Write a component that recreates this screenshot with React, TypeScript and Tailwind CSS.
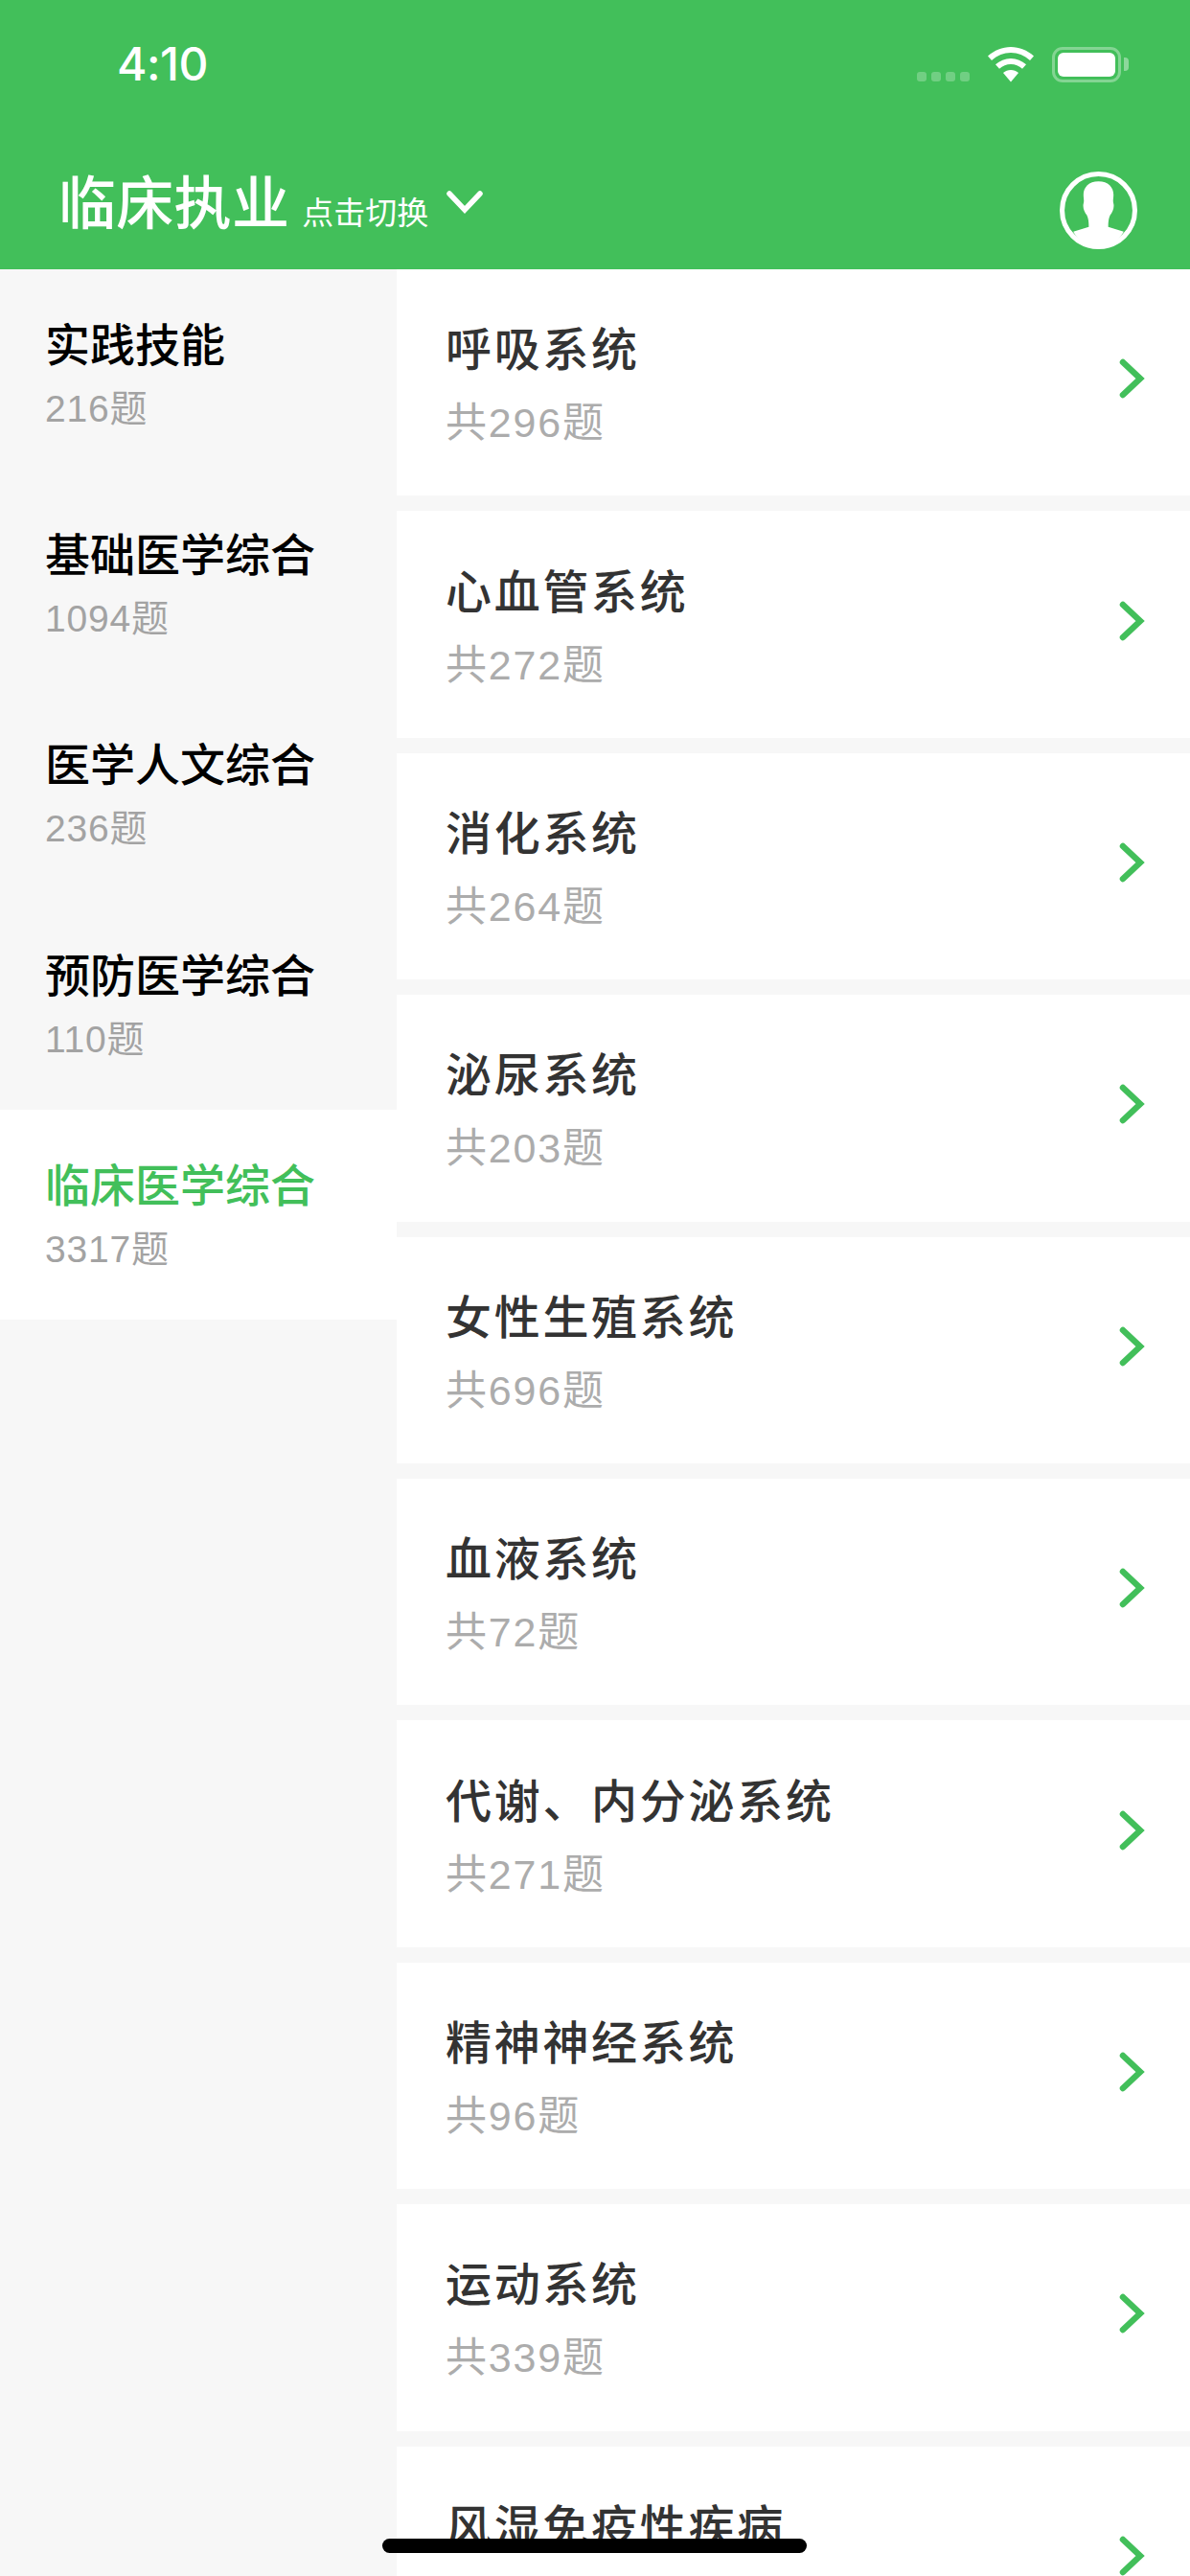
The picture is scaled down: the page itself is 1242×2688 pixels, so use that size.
const side = [
  ["实践技能", "216题"],
  ["基础医学综合", "1094题"],
  ["医学人文综合", "236题"],
  ["预防医学综合", "110题"],
  ["临床医学综合", "3317题"],
];
const rows = [
  ["呼吸系统", "共296题"],
  ["心血管系统", "共272题"],
  ["消化系统", "共264题"],
  ["泌尿系统", "共203题"],
  ["女性生殖系统", "共696题"],
  ["血液系统", "共72题"],
  ["代谢、内分泌系统", "共271题"],
  ["精神神经系统", "共96题"],
  ["运动系统", "共339题"],
  ["风湿免疫性疾病", "\u00a0"],
];

function Chevron() {
  return (
    <svg width="32" height="48" viewBox="0 0 32 48" fill="none" className="mt-[-8px] mr-[46px] shrink-0">
      <path d="M8 7 L26 24 L8 41" stroke="#42bf5a" strokeWidth="6.500" strokeLinecap="round" strokeLinejoin="miter" />
    </svg>
  );
}

export default function App() {
  return (
    <div className="relative w-[1242px] h-[2688px] overflow-hidden bg-[#f7f7f7] font-['Liberation_Sans','Noto_Sans_CJK_SC',sans-serif]">
      <header className="h-[281px] bg-[#42bf5a] text-white flex flex-col">
        <div className="h-[166px] pt-[41px] pl-[122px] pr-[65px] flex items-start justify-between">
          <span className="font-['Inter',sans-serif] font-medium text-[48px] leading-[52px] tracking-[-0.5px]">4:10</span>
          <div className="flex items-start pt-[8px]">
            <div className="flex gap-[5px] mt-[26px] mr-[19px]">
              <span className="w-[10px] h-[10px] rounded-[3px] bg-white/25" />
              <span className="w-[10px] h-[10px] rounded-[3px] bg-white/25" />
              <span className="w-[10px] h-[10px] rounded-[3px] bg-white/25" />
              <span className="w-[10px] h-[10px] rounded-[3px] bg-white/25" />
            </div>
            <svg width="48" height="37" viewBox="0 0 48 37" fill="white" className="mr-[19px]">
              <path d="M24 0C15 0 7 3.400 0 9.500L4 14C10 8.700 16.500 6 24 6C31.500 6 38 8.700 44 14L48 9.500C41 3.400 33 0 24 0Z" />
              <path d="M24 12C18 12 12.500 14.300 8 18.300L12 22.800C15.500 19.800 19.500 18 24 18C28.500 18 32.500 19.800 36 22.800L40 18.300C35.500 14.300 30 12 24 12Z" />
              <path d="M24 24C21 24 18.300 25 16 27L24 36.500L32 27C29.700 25 27 24 24 24Z" />
            </svg>
            <div className="relative w-[72px] h-[37px] mr-[7px] rounded-[11px] border-[3px] border-white/35 p-[3px]">
              <div className="w-full h-full rounded-[6px] bg-white" />
              <div className="absolute right-[-11px] top-[8px] w-[5px] h-[14px] rounded-r-[4px] bg-white/40" />
            </div>
          </div>
        </div>
        <div className="flex-1 flex items-start justify-between pl-[61px] pr-[55px]">
          <div className="flex items-baseline mt-[6px]">
            <span className="text-[60px] leading-[84px] font-medium tracking-[0.3px]">临床执业</span>
            <span className="ml-[13px] text-[33px] leading-[40px]">点击切换</span>
            <svg width="40" height="28" viewBox="0 0 40 28" fill="none" className="ml-[18px] self-start mt-[26px]">
              <path d="M4 4 L20 21 L36 4" stroke="white" strokeWidth="5.500" strokeLinecap="round" />
            </svg>
          </div>
          <svg width="81" height="81" viewBox="0 0 80 80" className="mt-[13px]">
            <circle cx="40" cy="40" r="37.500" fill="none" stroke="white" strokeWidth="5" />
            <path
              fill="white"
              d="M40 10C30 10 24.500 16 24.500 24C24.500 28 25.500 30 24.500 33C23.500 37 25.500 42 28 45C29.500 48 30 52 30 57L14 62C20 72 30 78 40 78C50 78 60 72 66 62L50 57C50 52 50.500 48 52 45C54.500 42 56.500 37 55.500 33C54.500 30 55.500 28 55.500 24C55.500 16 50 10 40 10Z"
            />
          </svg>
        </div>
      </header>

      <div className="flex items-start">
        <aside className="w-[414px] shrink-0">
          {side.map(([t, c], i) => (
            <div key={t} className={`h-[219.200px] pl-[47px] pt-[50px] ${i === 4 ? "bg-white" : ""}`}>
              <div className={`text-[47px] leading-[60px] font-medium ${i === 4 ? "text-[#42bf5a]" : "text-black"}`}>{t}</div>
              <div className="mt-[11px] text-[39px] leading-[50px] tracking-[0.8px] text-[#a3a3a3]">{c}</div>
            </div>
          ))}
        </aside>
        <main className="flex-1 flex flex-col gap-[16px]">
          {rows.map(([t, c]) => (
            <div key={t} className="h-[236.400px] shrink-0 bg-white pl-[51px] flex items-center justify-between">
              <div className="mt-[2px]">
                <div className="text-[48px] leading-[64px] font-medium text-[#333333] tracking-[2.7px]">{t}</div>
                <div className="mt-[18px] text-[43px] leading-[50px] tracking-[1.8px] text-[#acacac]">{c}</div>
              </div>
              <Chevron />
            </div>
          ))}
        </main>
      </div>

      <div className="absolute left-[399px] top-[2649px] w-[443px] h-[15px] rounded-full bg-black" />
    </div>
  );
}
